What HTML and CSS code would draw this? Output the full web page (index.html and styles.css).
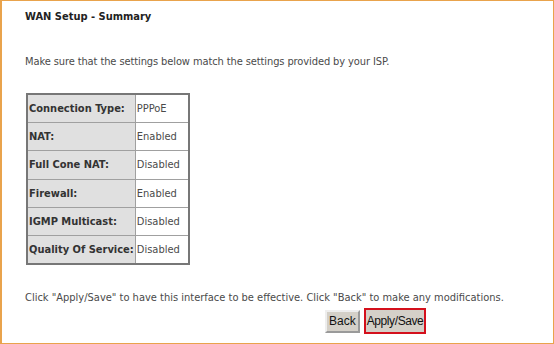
FILE: index.html
```html
<!DOCTYPE html>
<html lang="en">
<head>
  <meta charset="UTF-8">
  <title>WAN Setup - Summary</title>
  <link rel="stylesheet" href="styles.css">
</head>
<body>
  <div class="cornice">
    <b class="titolo">WAN Setup - Summary</b>
    <p class="nota">Make sure that the settings below match the settings provided by your ISP.</p>
    <table class="riepilogo">
      <tr><td class="etichetta">Connection Type:</td><td>PPPoE</td></tr>
      <tr><td class="etichetta">NAT:</td><td>Enabled</td></tr>
      <tr><td class="etichetta">Full Cone NAT:</td><td>Disabled</td></tr>
      <tr><td class="etichetta">Firewall:</td><td>Enabled</td></tr>
      <tr><td class="etichetta">IGMP Multicast:</td><td>Disabled</td></tr>
      <tr><td class="etichetta">Quality Of Service:</td><td>Disabled</td></tr>
    </table>
    <p class="nota finale">Click "Apply/Save" to have this interface to be effective. Click "Back" to make any modifications.</p>
    <div class="pulsanti">
      <button>Back</button>
      <button class="salva">Apply/Save</button>
    </div>
  </div>
</body>
</html>
```

FILE: styles.css
```css
* {
  box-sizing: border-box;
  margin: 0;
  padding: 0;
}

html, body {
  width: 554px;
  height: 344px;
  overflow: hidden;
}

body {
  font-family: "DejaVu Sans Condensed", "DejaVu Sans", sans-serif;
  font-size: 11px;
  color: #333;
  background: #fff;
}

.cornice {
  width: 554px;
  height: 344px;
  border: 1px solid #e9a34c;
  border-left-width: 2px;
  padding: 9px 0 0 23px;
  display: flex;
  flex-direction: column;
  align-items: flex-start;
}

.titolo {
  line-height: 13px;
  color: #222;
}

.nota {
  margin-top: 32px;
  line-height: 13px;
  color: #4a4a4a;
  letter-spacing: -0.1px;
}

.riepilogo {
  margin-top: 25px;
  margin-left: 1px;
  border-collapse: collapse;
  border: 2px solid #777;
}

.riepilogo td {
  border: 1px solid #a0a0a0;
  height: 28.4px;
  padding: 0 1px;
  color: #4a4a4a;
  width: 54px;
}

.riepilogo td.etichetta {
  background: #e0e0e0;
  font-weight: bold;
  color: #333;
  width: auto;
}

.finale {
  margin-top: 26px;
  letter-spacing: 0;
}

.pulsanti {
  margin: 4px 0 0 300px;
  display: flex;
  gap: 4px;
  align-items: center;
}

.pulsanti button {
  font-family: "Liberation Sans", Arial, sans-serif;
  font-size: 12px;
  color: #111;
  background: #d4d0c8;
  border: 2px outset #eee;
  padding: 2px 2px;
  height: 23px;
}

.pulsanti button.salva {
  border: 2px solid #d4101c;
  height: 26px;
  padding: 2px 1px;
  letter-spacing: -0.4px;
}
```
